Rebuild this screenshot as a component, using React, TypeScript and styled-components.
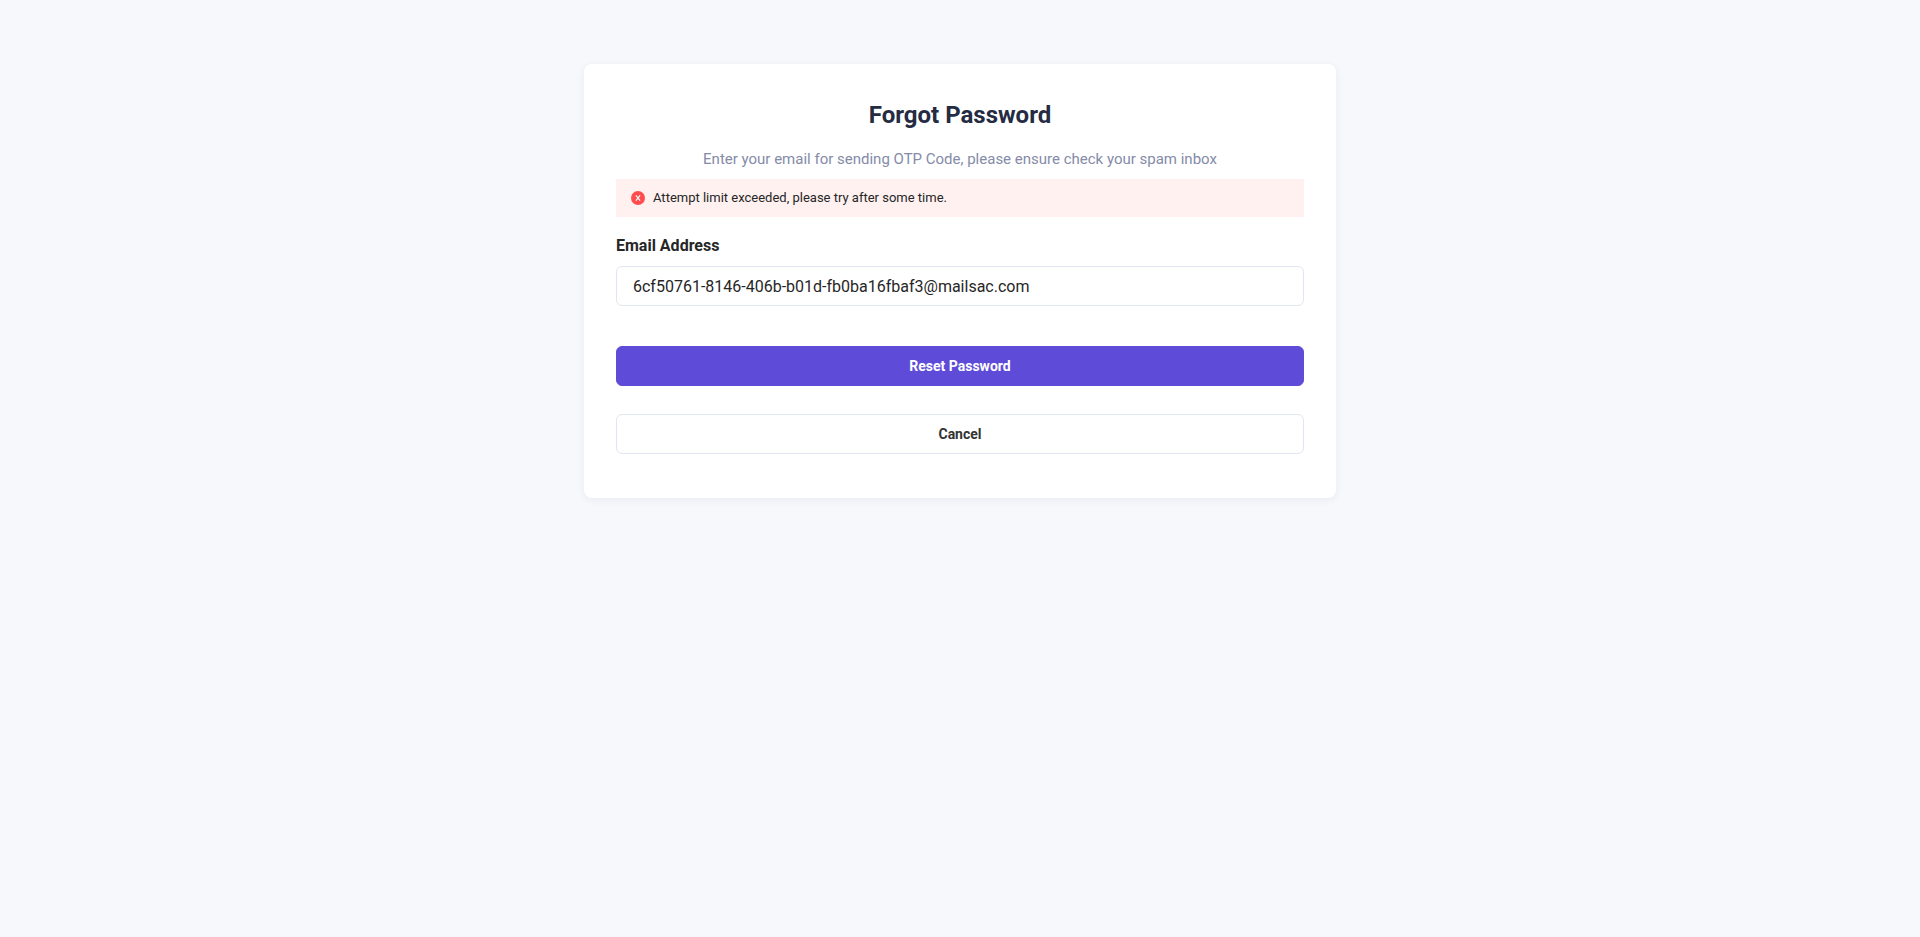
import React, { useState } from 'react';
import styled, { createGlobalStyle, css } from 'styled-components';

const GlobalStyle = createGlobalStyle`
  *, *::before, *::after {
    box-sizing: border-box;
  }

  body {
    margin: 0;
    min-height: 100vh;
    background: #f7f8fc;
    color: #262626;
    font-family: Roboto, 'Liberation Sans', sans-serif;
    font-size: 16px;
    line-height: 24px;
    -webkit-font-smoothing: antialiased;
  }
`;

const Page = styled.main`
  display: flex;
  justify-content: center;
  padding: 64px 16px;
`;

const Card = styled.section`
  width: 100%;
  max-width: 752px;
  padding: 32px 32px 44px;
  border-radius: 8px;
  background: #ffffff;
  box-shadow: 0 2px 8px rgba(32, 41, 64, 0.06);
`;

const Title = styled.h1`
  margin: 0 0 13px;
  color: #252b42;
  font-size: 24px;
  font-weight: 700;
  line-height: 38px;
  text-align: center;
`;

const Hint = styled.p`
  margin: 0 0 8px;
  color: #858ba8;
  font-size: 15px;
  text-align: center;
`;

const Alert = styled.div`
  display: flex;
  align-items: center;
  gap: 8px;
  padding: 8px 15px;
  background: #fff1f0;
  font-size: 13px;
  line-height: 22px;
`;

const Form = styled.form`
  display: flex;
  flex-direction: column;
  margin-top: 17px;
`;

const Label = styled.label`
  margin-bottom: 8px;
  font-weight: 700;
`;

const field = css`
  width: 100%;
  height: 40px;
  border: 1px solid #e2e6f0;
  border-radius: 6px;
  background: #ffffff;
  font-family: inherit;
`;

const Input = styled.input`
  ${field}
  padding: 0 16px;
  color: #262626;
  font-size: 16px;
`;

const Actions = styled.div`
  display: flex;
  flex-direction: column;
  gap: 28px;
  margin-top: 40px;
`;

const Button = styled.button<{ $primary?: boolean }>`
  ${field}
  color: #333333;
  font-size: 14px;
  font-weight: 700;
  cursor: pointer;

  ${({ $primary }) =>
    $primary &&
    css`
      border-color: #5e4bd8;
      background: #5e4bd8;
      color: #ffffff;
    `}
`;

function ErrorIcon() {
  return (
    <svg width="14" height="14" viewBox="0 0 14 14" aria-hidden="true">
      <circle cx="7" cy="7" r="7" fill="#ff4d4f" />
      <path d="M4.9 4.4 9.1 9.6M9.1 4.4 4.9 9.6" stroke="#ffffff" strokeWidth="1.1" />
    </svg>
  );
}

export default function App() {
  const [email, setEmail] = useState('6cf50761-8146-406b-b01d-fb0ba16fbaf3@mailsac.com');

  return (
    <>
      <GlobalStyle />
      <Page>
        <Card>
          <Title>Forgot Password</Title>
          <Hint>Enter your email for sending OTP Code, please ensure check your spam inbox</Hint>
          <Alert role="alert">
            <ErrorIcon />
            <span>Attempt limit exceeded, please try after some time.</span>
          </Alert>
          <Form onSubmit={(event) => event.preventDefault()}>
            <Label htmlFor="email">Email Address</Label>
            <Input
              id="email"
              type="text"
              inputMode="email"
              spellCheck={false}
              value={email}
              onChange={(event) => setEmail(event.target.value)}
            />
            <Actions>
              <Button type="submit" $primary>
                Reset Password
              </Button>
              <Button type="button">Cancel</Button>
            </Actions>
          </Form>
        </Card>
      </Page>
    </>
  );
}
